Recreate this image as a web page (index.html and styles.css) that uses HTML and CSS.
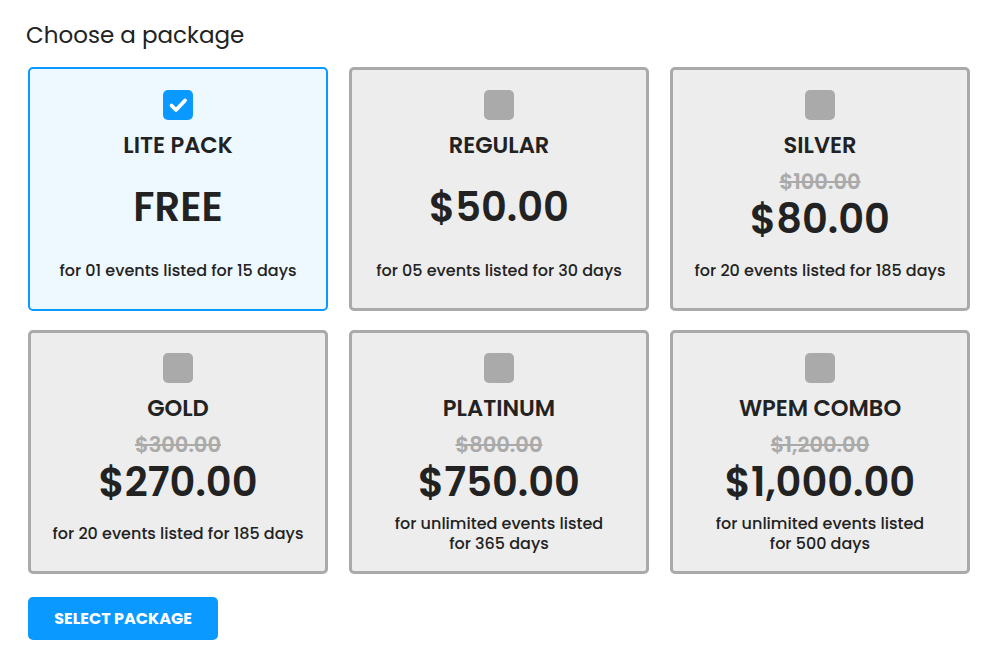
FILE: index.html
```html
<!DOCTYPE html>
<html lang="en">
<head>
<meta charset="utf-8">
<title>Choose a package</title>
<link rel="stylesheet" href="styles.css">
</head>
<body>
<div class="page">
  <h2 class="heading">Choose a package</h2>
  <div class="grid">
    <div class="card selected">
      <span class="check"><svg viewBox="0 0 30 30" width="30" height="30"><path d="M8.5 15.5 L13 20 L22 10.5" fill="none" stroke="#fff" stroke-width="3.8" stroke-linecap="round" stroke-linejoin="round"/></svg></span>
      <div class="title">LITE PACK</div>
      <div class="prices"><div class="price">FREE</div></div>
      <div class="desc">for 01 events listed for 15 days</div>
    </div>
    <div class="card">
      <span class="check"></span>
      <div class="title">REGULAR</div>
      <div class="prices"><div class="price">$50.00</div></div>
      <div class="desc">for 05 events listed for 30 days</div>
    </div>
    <div class="card">
      <span class="check"></span>
      <div class="title">SILVER</div>
      <div class="prices"><div class="old">$100.00</div><div class="price">$80.00</div></div>
      <div class="desc">for 20 events listed for 185 days</div>
    </div>
    <div class="card">
      <span class="check"></span>
      <div class="title">GOLD</div>
      <div class="prices"><div class="old">$300.00</div><div class="price">$270.00</div></div>
      <div class="desc">for 20 events listed for 185 days</div>
    </div>
    <div class="card">
      <span class="check"></span>
      <div class="title">PLATINUM</div>
      <div class="prices"><div class="old">$800.00</div><div class="price">$750.00</div></div>
      <div class="desc">for unlimited events listed<br>for 365 days</div>
    </div>
    <div class="card">
      <span class="check"></span>
      <div class="title">WPEM COMBO</div>
      <div class="prices"><div class="old">$1,200.00</div><div class="price">$1,000.00</div></div>
      <div class="desc">for unlimited events listed<br>for 500 days</div>
    </div>
  </div>
  <button class="btn">SELECT PACKAGE</button>
</div>
</body>
</html>
```
FILE: styles.css
```css
* { box-sizing: border-box; }
html, body { margin: 0; padding: 0; background: #fff; }
body {
  font-family: "Poppins", "Open Sans", "DejaVu Sans", sans-serif;
  color: #222;
}
.page { padding: 20px 30px 0 28px; }
.heading {
  margin: 0 0 16px -2px;
  font-size: 23px;
  line-height: 31px;
  font-weight: 400;
  color: #222;
}
.grid {
  display: grid;
  grid-template-columns: repeat(3, 300px);
  column-gap: 21px;
  row-gap: 19px;
}
.card {
  height: 244px;
  border: 3px solid #aaa;
  border-radius: 5px;
  background: #ededed;
  display: flex;
  flex-direction: column;
  align-items: center;
  padding-top: 20px;
  text-align: center;
}
.card.selected {
  border: 2px solid #0a99ff;
  background: #eef8ff;
  padding-top: 21px;
}
.check {
  display: block;
  width: 30px;
  height: 30px;
  border-radius: 5px;
  background: #aaa;
  flex: none;
}
.selected .check { background: #0a99ff; }
.check svg { display: block; }
.title {
  margin-top: 11px;
  font-size: 22.6px;
  line-height: 28px;
  font-weight: 600;
  height: 28px;
}
.prices {
  height: 95px;
  display: flex;
  flex-direction: column;
  justify-content: center;
  align-items: center;
}
.old {
  font-size: 21px;
  line-height: 20px;
  font-weight: 600;
  color: #aaa;
  text-decoration: line-through;
  margin-bottom: 5px;
}
.price {
  font-size: 40px;
  line-height: 44px;
  font-weight: 600;
  color: #222;
}
.desc {
  height: 34px;
  display: flex;
  align-items: center;
  justify-content: center;
  font-size: 16px;
  line-height: 20px;
  font-weight: 500;
}
.btn {
  margin-top: 23px;
  width: 190px;
  height: 43px;
  border: 0;
  border-radius: 5px;
  background: #0a99ff;
  color: #fff;
  font-family: inherit;
  font-size: 16px;
  font-weight: 700;
  padding: 0;
  cursor: pointer;
}
```
